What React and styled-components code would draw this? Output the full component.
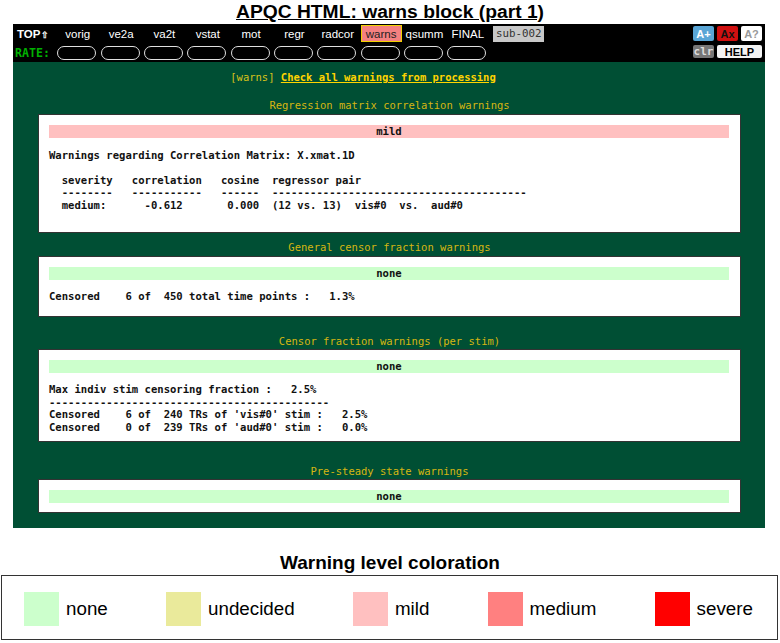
import styled, { createGlobalStyle } from "styled-components";

const GlobalStyle = createGlobalStyle`
  body {
    margin: 0;
    background: #ffffff;
    font-family: "Liberation Sans", Arial, sans-serif;
  }
`;

const MONO = `"DejaVu Sans Mono", "Liberation Mono", monospace`;

const NAV_ITEMS = ["vorig", "ve2a", "va2t", "vstat", "mot", "regr", "radcor", "warns", "qsumm", "FINAL"];

const LEVELS = [
  { name: "none", color: "#ccffcc" },
  { name: "undecided", color: "#eaea9b" },
  { name: "mild", color: "#ffc0c0" },
  { name: "medium", color: "#ff8080" },
  { name: "severe", color: "#ff0000" },
];

const Page = styled.div`
  width: 780px;
`;

const Title = styled.h1`
  margin: 0;
  height: 24px;
  font-size: 19.25px;
  line-height: 23px;
  font-weight: 700;
  text-align: center;
  text-decoration: underline;
  color: #000;
`;

const Nav = styled.nav`
  margin-left: 13px;
  width: 752px;
  height: 38px;
  background: #000;
  display: flex;
  justify-content: space-between;
`;

const NavGrid = styled.div`
  display: grid;
  grid-template-columns: 44.3px repeat(10, 43.33px) auto;
  grid-template-rows: 19px 19px;
  align-items: center;
`;

const TopLink = styled.span`
  padding-left: 4px;
  color: #fff;
  font-weight: 700;
  font-size: 11.5px;
  span {
    font-size: 9px;
    margin-left: 1px;
  }
`;

const RateLabel = styled.span`
  padding-left: 2px;
  color: #00b000;
  font-family: ${MONO};
  font-weight: 700;
  font-size: 11.6px;
`;

const NavItem = styled.span`
  width: 41px;
  height: 17px;
  box-sizing: border-box;
  display: flex;
  align-items: center;
  justify-content: center;
  font-size: 11.5px;
  color: ${(p) => (p.$active ? "#222" : "#fff")};
  background: ${(p) => (p.$active ? "#f58080" : "transparent")};
  border: 1.5px solid ${(p) => (p.$active ? "#f0d000" : "transparent")};
`;

const SubjectTag = styled.span`
  margin-left: 2.7px;
  width: 51px;
  height: 16px;
  display: flex;
  align-items: center;
  justify-content: center;
  background: #c8c8c8;
  color: #333;
  font-family: ${MONO};
  font-size: 10.8px;
`;

const Pill = styled.span`
  width: 39px;
  height: 14px;
  box-sizing: border-box;
  border: 1px solid #e0e0e0;
  border-radius: 8px;
`;

const ButtonGrid = styled.div`
  margin-right: 3px;
  display: grid;
  grid-template-columns: 21px 21px 21px;
  grid-template-rows: 15px 13px;
  column-gap: 3px;
  row-gap: 4px;
  padding-top: 2px;
`;

const SmallButton = styled.span`
  display: flex;
  align-items: center;
  justify-content: center;
  border-radius: 2px;
  font-size: 11px;
  font-weight: 700;
  font-family: ${(p) => (p.$mono ? MONO : "inherit")};
  background: ${(p) => p.$bg};
  color: ${(p) => p.$fg};
  grid-column: ${(p) => p.$span || "auto"};
`;

const Panel = styled.main`
  margin-left: 13px;
  width: 752px;
  box-sizing: border-box;
  background: #004f34;
  padding: 9px 24px 15px 25px;
  font-family: ${MONO};
`;

const LinkLine = styled.div`
  padding-right: 53px;
  font-size: 10.5px;
  line-height: 13px;
  text-align: center;
  color: #d8c21a;
  a {
    color: #ffd400;
    font-weight: 700;
    text-decoration: underline;
  }
`;

const SectionTitle = styled.div`
  margin-top: ${(p) => p.$mt}px;
  margin-bottom: ${(p) => p.$mb ?? 2}px;
  font-size: 10.5px;
  line-height: 13px;
  text-align: center;
  color: #d6b612;
`;

const Box = styled.section`
  background: #fff;
  border: 1px solid #333;
  padding: 10px 11px ${(p) => p.$pb}px 10px;
`;

const LevelBar = styled.div`
  height: 13px;
  background: ${(p) => p.$color};
  font-weight: 700;
  font-size: 10.6px;
  line-height: 13px;
  text-align: center;
  color: #111;
`;

const Pre = styled.pre`
  margin: ${(p) => p.$mt}px 0 0;
  font-family: ${MONO};
  font-weight: 700;
  font-size: 10.58px;
  line-height: 12.4px;
  color: #111;
`;

const LegendTitle = styled.h2`
  margin: 23px 0 1px;
  font-size: 19px;
  line-height: 23px;
  font-weight: 700;
  text-align: center;
  color: #000;
`;

const Legend = styled.div`
  margin: 0 2px 0 1px;
  height: 65px;
  box-sizing: border-box;
  border: 1.5px solid #333;
  padding: 3px 24px 0 22px;
  display: flex;
  align-items: center;
  justify-content: space-between;
`;

const LegendItem = styled.div`
  display: flex;
  align-items: center;
  gap: 7px;
  font-size: 18.8px;
  color: #000;
`;

const Swatch = styled.span`
  width: 35px;
  height: 34px;
  background: ${(p) => p.$color};
`;

const corrText = `Warnings regarding Correlation Matrix: X.xmat.1D

  severity   correlation   cosine  regressor pair
  --------   -----------   ------  ----------------------------------------
  medium:      -0.612       0.000  (12 vs. 13)  vis#0  vs.  aud#0`;

const censorText = `Censored    6 of  450 total time points :   1.3%`;

const stimText = `Max indiv stim censoring fraction :   2.5%
--------------------------------------------
Censored    6 of  240 TRs of 'vis#0' stim :   2.5%
Censored    0 of  239 TRs of 'aud#0' stim :   0.0%`;

export default function App() {
  return (
    <Page>
      <GlobalStyle />
      <Title>APQC HTML: warns block (part 1)</Title>

      <Nav>
        <NavGrid>
          <TopLink>
            TOP<span>⇧</span>
          </TopLink>
          {NAV_ITEMS.map((item) => (
            <NavItem key={item} $active={item === "warns"}>
              {item}
            </NavItem>
          ))}
          <SubjectTag>sub-002</SubjectTag>
          <RateLabel>RATE:</RateLabel>
          {NAV_ITEMS.map((item) => (
            <Pill key={item} />
          ))}
        </NavGrid>
        <ButtonGrid>
          <SmallButton $bg="#5aa6d6" $fg="#fff">A+</SmallButton>
          <SmallButton $bg="#d01010" $fg="#111">Ax</SmallButton>
          <SmallButton $bg="#fff" $fg="#999">A?</SmallButton>
          <SmallButton $bg="#777" $fg="#ddd" $mono>clr</SmallButton>
          <SmallButton $bg="#f4f4f4" $fg="#000" $span="span 2">HELP</SmallButton>
        </ButtonGrid>
      </Nav>

      <Panel>
        <LinkLine>
          [warns] <a>Check all warnings from processing</a>
        </LinkLine>

        <SectionTitle $mt={15}>Regression matrix correlation warnings</SectionTitle>
        <Box $pb={21}>
          <LevelBar $color="#ffc0c0">mild</LevelBar>
          <Pre $mt={11}>{corrText}</Pre>
        </Box>

        <SectionTitle $mt={8}>General censor fraction warnings</SectionTitle>
        <Box $pb={14}>
          <LevelBar $color="#ccffcc">none</LevelBar>
          <Pre $mt={10}>{censorText}</Pre>
        </Box>

        <SectionTitle $mt={18} $mb={1}>Censor fraction warnings (per stim)</SectionTitle>
        <Box $pb={8}>
          <LevelBar $color="#ccffcc">none</LevelBar>
          <Pre $mt={10}>{stimText}</Pre>
        </Box>

        <SectionTitle $mt={23} $mb={1}>Pre-steady state warnings</SectionTitle>
        <Box $pb={9}>
          <LevelBar $color="#ccffcc">none</LevelBar>
        </Box>
      </Panel>

      <LegendTitle>Warning level coloration</LegendTitle>
      <Legend>
        {LEVELS.map((level) => (
          <LegendItem key={level.name}>
            <Swatch $color={level.color} />
            {level.name}
          </LegendItem>
        ))}
      </Legend>
    </Page>
  );
}
